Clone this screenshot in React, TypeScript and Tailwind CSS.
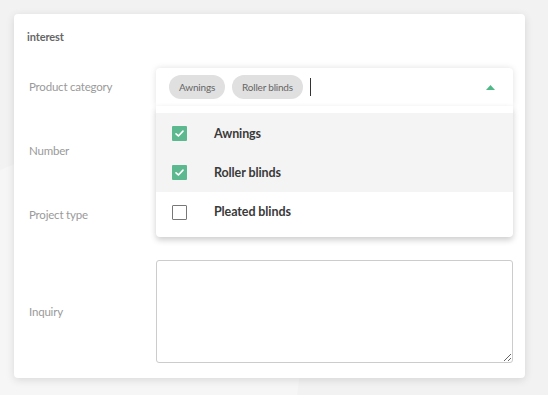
import React, { useState } from 'react';

type Option = { label: string; checked: boolean };

const initialOptions: Option[] = [
  { label: 'Awnings', checked: true },
  { label: 'Roller blinds', checked: true },
  { label: 'Pleated blinds', checked: false },
];

const Checkbox: React.FC<{ checked: boolean }> = ({ checked }) =>
  checked ? (
    <span className="w-[15px] h-[15px] flex items-center justify-center bg-[#5cb88e] rounded-[1px]">
      <svg width="11" height="11" viewBox="0 0 12 12" fill="none">
        <path d="M2.2 6.3 L4.8 8.7 L9.8 3.4" stroke="white" strokeWidth="1.8" strokeLinecap="round" strokeLinejoin="round" />
      </svg>
    </span>
  ) : (
    <span className="block w-[15px] h-[15px] border-[1.5px] border-[#777] rounded-[1px] bg-white" />
  );

const App: React.FC = () => {
  const [options, setOptions] = useState<Option[]>(initialOptions);
  const [open] = useState(true);

  const toggle = (i: number) => {
    setOptions(options.map((o, idx) => (idx === i ? { ...o, checked: !o.checked } : o)));
  };

  const selected = options.filter((o) => o.checked);

  return (
    <main className="relative w-[548px] h-[395px] overflow-hidden bg-[#f2f2f2] p-[14px] pb-0 font-['Lato',sans-serif]">
      {/* faint background shape */}
      <div className="absolute left-[-120px] top-[150px] w-[420px] h-[420px] rounded-full bg-[#f6f6f6]" />

      <section className="relative w-[511px] h-[364px] bg-white rounded-[4px] shadow-[0_2px_8px_rgba(0,0,0,0.12)] pl-[13px] pr-[12px] pt-[16px]">
        <h2 className="text-[11px] font-bold text-[#666] leading-[14px] tracking-[-0.1px]">interest</h2>

        <div className="mt-[24px] grid grid-cols-[129px_1fr] gap-y-[26px] items-center">
          <label className="text-[11.5px] text-[#9a9a9a] pl-[2px] tracking-[-0.2px]">Product category</label>
          <div className="relative">
            <div className="h-[38px] bg-white rounded-t-[4px] shadow-[0_0_6px_rgba(0,0,0,0.12)] flex items-center pl-[13px] pr-[18px] gap-[7px]">
              {selected.map((o) => (
                <span key={o.label} className="h-[24px] px-[10px] rounded-full bg-[#e0e0e0] text-[10px] text-[#666] flex items-center tracking-[-0.2px]">
                  {o.label}
                </span>
              ))}
              <span className="w-[1px] h-[18px] bg-[#333]" />
              <span className="ml-auto">
                <svg width="9" height="5" viewBox="0 0 9 5">
                  <path d="M0 5 L4.5 0 L9 5 Z" fill="#4fb887" />
                </svg>
              </span>
            </div>

            {open && (
              <ul className="absolute left-0 right-0 top-[38px] z-10 bg-white rounded-b-[4px] shadow-[0_3px_6px_rgba(0,0,0,0.2)] pt-[7px] pb-[6px]">
                {options.map((o, i) => (
                  <li
                    key={o.label}
                    onClick={() => toggle(i)}
                    className={`h-[39.3px] flex items-center pl-[16px] gap-[27px] cursor-pointer ${i < 2 ? 'bg-[#f4f4f4]' : 'bg-white'}`}
                  >
                    <span className="flex shrink-0 pt-[2px]">
                      <Checkbox checked={o.checked} />
                    </span>
                    <span className="pt-[3px] text-[12.5px] font-bold text-[#3a3a3a] tracking-[-0.1px]">{o.label}</span>
                  </li>
                ))}
              </ul>
            )}
          </div>

          <label className="text-[11.5px] text-[#9a9a9a] pl-[2px] tracking-[-0.2px]">Number</label>
          <input className="h-[38px] border border-[#ccc] rounded-[3px] px-3 text-sm outline-none" />

          <label className="text-[11.5px] text-[#9a9a9a] pl-[2px] tracking-[-0.2px]">Project type</label>
          <input className="h-[38px] border border-[#ccc] rounded-[3px] px-3 text-sm outline-none" />

          <label className="text-[11.5px] text-[#9a9a9a] pl-[2px] tracking-[-0.2px]">Inquiry</label>
          <textarea className="h-[103px] border border-[#ccc] rounded-[3px] px-3 py-2 text-sm outline-none resize-y" />
        </div>
      </section>
    </main>
  );
};

export default App;
